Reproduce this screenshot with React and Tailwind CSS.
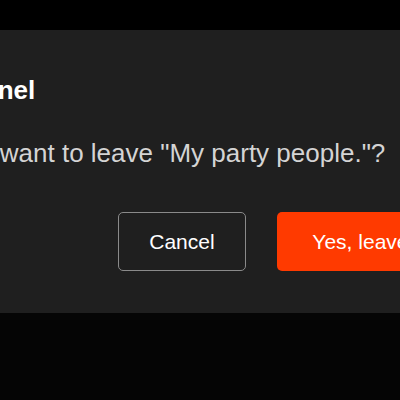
import React from "react";

export default function App() {
  return (
    <div className="h-[400px] w-[400px] overflow-hidden bg-[#050505] font-['Liberation_Sans',Arial,sans-serif]">
      <div className="h-[30px] bg-black" />
      {/* ================= DIALOG ================= */}
      <div className="-ml-[240px] flex h-[283px] w-[720px] flex-col bg-[#1f1f1f] px-[36px]">
        <h2 className="mt-[45px] ml-[60px] text-[26px] font-bold leading-[30px] text-white">
          Leave channel
        </h2>
        <p className="mt-[33px] text-[26px] leading-[30px] text-[#d4d4d4]">
          Are you sure you want to leave "My party people."?
        </p>
        <div className="mt-[44px] flex gap-[31px] pl-[322px]">
          <button className="h-[59px] w-[130px] rounded-[5px] border-[1.5px] border-[#8a8a8a] text-[21px] text-white">
            Cancel
          </button>
          <button className="h-[59px] w-[170px] rounded-[5px] bg-[#ff3a00] text-[21px] text-white">
            Yes, leave
          </button>
        </div>
      </div>
    </div>
  );
}
